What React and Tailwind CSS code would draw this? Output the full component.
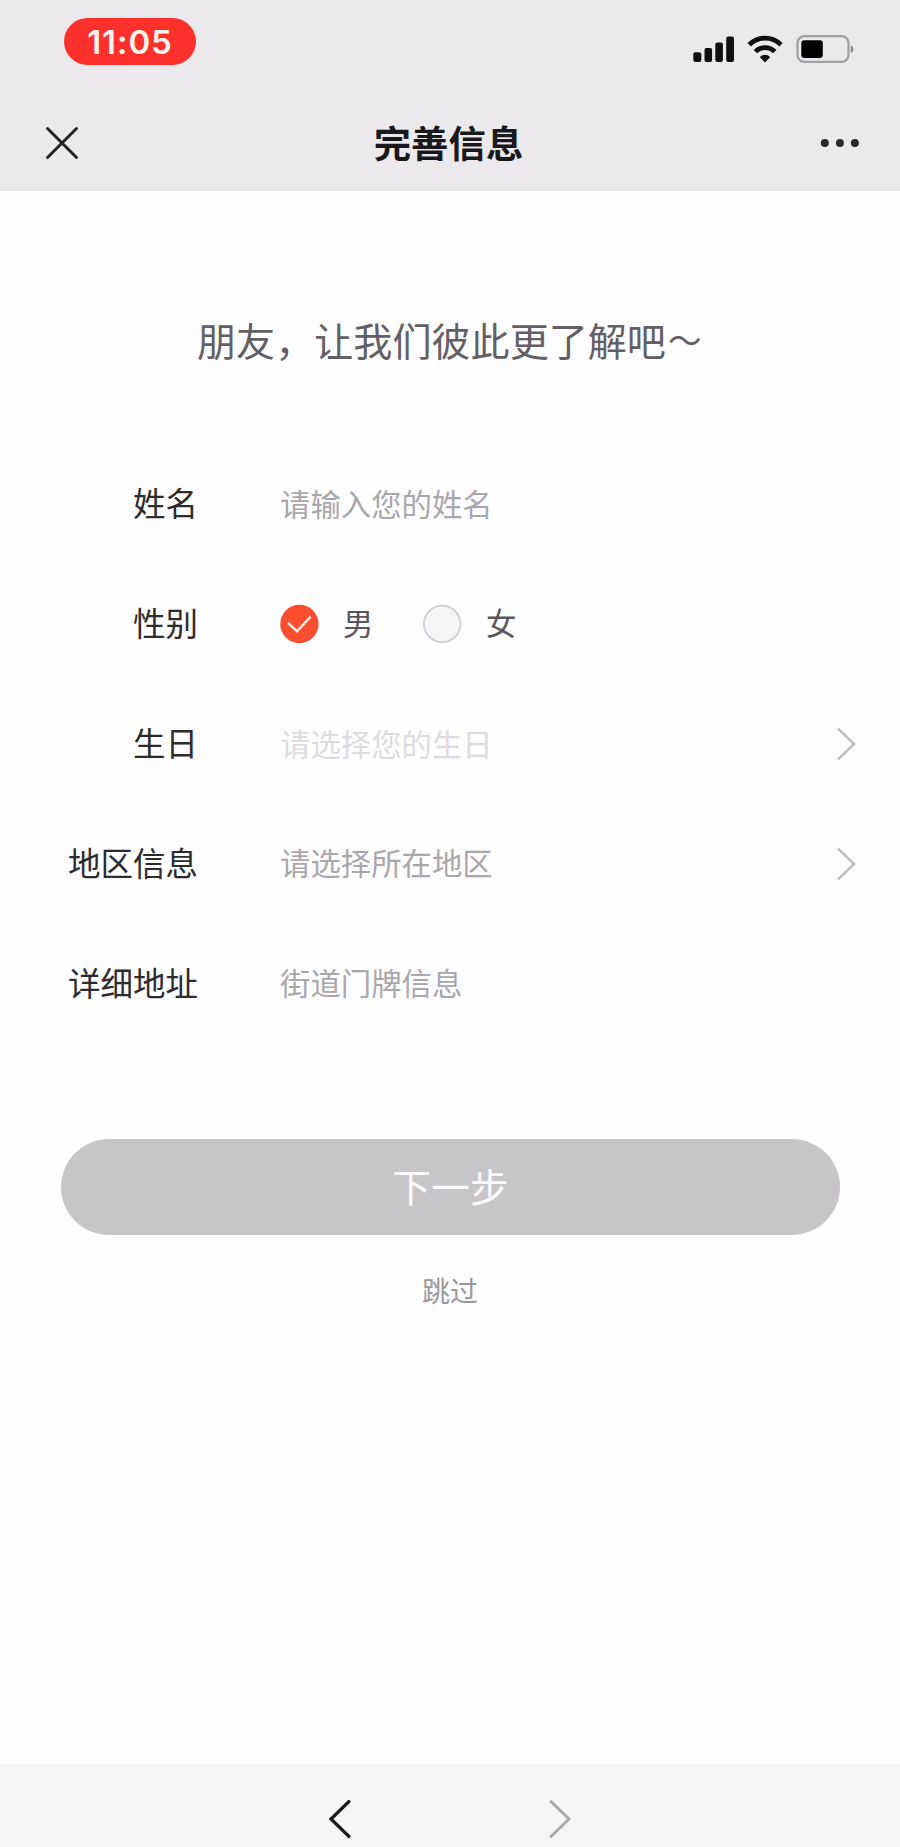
import { useState } from "react";

const fields = [
  { key: "name", label: "姓名", type: "input", placeholder: "请输入您的姓名" },
  { key: "gender", label: "性别", type: "radio", options: ["男", "女"] },
  { key: "birthday", label: "生日", type: "picker", placeholder: "请选择您的生日", faded: true },
  { key: "region", label: "地区信息", type: "picker", placeholder: "请选择所在地区" },
  { key: "address", label: "详细地址", type: "input", placeholder: "街道门牌信息" },
];

function StatusBar() {
  return (
    <div className="flex h-[84px] items-start justify-between pl-16 pr-[45px]">
      <div className="mt-[18px] flex h-[47px] w-[132px] items-center justify-center rounded-full bg-[#fd312c] pt-px font-['Inter'] text-[33px] leading-none font-semibold tracking-[0.9px] text-[#fff3ee]">
        11:05
      </div>
      <svg className="mt-[34px] h-[30px] w-[163px]" viewBox="0 0 163 30">
        <g fill="#101012">
          <rect x="1.3" y="18.2" width="8" height="9.8" rx="2" />
          <rect x="12.5" y="14" width="7.6" height="14" rx="2" />
          <rect x="23.3" y="8.4" width="7.6" height="19.6" rx="2" />
          <rect x="34.2" y="2.4" width="7.8" height="25.6" rx="2" />
          <path d="M68.6 23.2a6.2 6.2 0 0 1 8.8 0L73 27.6Z" stroke="#101012" strokeWidth="1.2" strokeLinejoin="round" />
        </g>
        <g fill="none" stroke="#101012" strokeWidth="4.8">
          <path d="M57.2 10.8a22.4 22.4 0 0 1 31.8 0" />
          <path d="M63.4 17.6a13.6 13.6 0 0 1 19.4 0" />
        </g>
        <rect x="105.5" y="2.1" width="51" height="25.8" rx="7" fill="none" stroke="#a09fa2" strokeWidth="2.2" />
        <rect x="109.3" y="6.3" width="21.5" height="17.6" rx="3" fill="#030303" />
        <path d="M158.8 11.5c3.6 1 3.6 6.6 0 7.6Z" fill="#8d8c8f" />
      </svg>
    </div>
  );
}

function NavBar() {
  return (
    <div className="flex h-[106px] items-center justify-between pl-[45px] pr-10">
      <svg className="mt-[11px] h-[34px] w-[34px]" viewBox="0 0 34 34" fill="none" stroke="#232225" strokeWidth="3" strokeLinecap="round">
        <path d="M2.5 2.5 31.5 31.5M31.5 2.5 2.5 31.5" />
      </svg>
      <h1 className="mt-[11px] mr-[2px] text-[37.4px] leading-none font-bold text-[#19181b]">完善信息</h1>
      <svg className="mt-[12px] h-[10px] w-[40px]" viewBox="0 0 40 10" fill="#29282b">
        <circle cx="4.8" cy="5" r="4" />
        <circle cx="19.9" cy="5" r="4" />
        <circle cx="34.9" cy="5" r="4" />
      </svg>
    </div>
  );
}

function Radio({ checked }) {
  return (
    <svg className="h-10 w-10" viewBox="0 0 40 40" fill="none">
      {checked ? (
        <>
          <circle cx="19.4" cy="20" r="19.2" fill="#fb4d30" />
          <path d="m8 18.8 9 8.4 13.6-14.6" stroke="#ffe9dc" strokeWidth="2.4" />
        </>
      ) : (
        <circle cx="19.2" cy="20" r="18.3" fill="#f5f4f7" stroke="#cfcdd1" strokeWidth="1.8" />
      )}
    </svg>
  );
}

function FieldRow({ field, gender, setGender }) {
  return (
    <div className="flex h-[119.9px] items-center">
      <div className="w-[198px] pb-[3px] text-right text-[32.5px] leading-none text-[#2c2b2e]">{field.label}</div>
      <div className="ml-[82px] flex flex-1 items-center text-[30.4px] leading-none">
        {field.type === "radio" ? (
          field.options.map((option) => (
            <button key={option} className="flex w-[143px] items-center" onClick={() => setGender(option)}>
              <Radio checked={gender === option} />
              <span className="ml-[23px] pb-[3px] text-[#58565a]">{option}</span>
            </button>
          ))
        ) : (
          <span className={field.faded ? "pb-0.5 text-[#dedbe0]" : "pb-0.5 text-[#aaa7ac]"}>{field.placeholder}</span>
        )}
      </div>
      {field.type === "picker" ? (
        <svg className="mt-px mr-11 h-[34px] w-5" viewBox="0 0 20 34" fill="none" stroke="#b9b8ba" strokeWidth="2.4">
          <path d="m2 1.5 16 15.5L2 32.5" />
        </svg>
      ) : null}
    </div>
  );
}

export default function App() {
  const [gender, setGender] = useState("男");

  return (
    <div className="flex h-[1847px] w-[900px] flex-col overflow-hidden bg-[#fefefe] font-['Noto_Sans_CJK_SC',sans-serif]">
      <header className="h-[191px] shrink-0 bg-[#ebe9ec]">
        <StatusBar />
        <NavBar />
      </header>

      <main className="flex-1">
        <p className="mt-[129px] ml-[197px] flex h-[39px] items-center text-[39.1px] leading-none whitespace-nowrap text-[#626064]">
          朋友，让我们彼此更了解吧<span className="ml-[2px] pb-[2px] text-[33.5px]">～</span>
        </p>
        <div className="mt-[85px]">
          {fields.map((field) => (
            <FieldRow key={field.key} field={field} gender={gender} setGender={setGender} />
          ))}
        </div>
        <button className="mt-[96px] ml-[61px] flex h-[96px] w-[779px] items-center justify-center rounded-full bg-[#c7c5c8] pb-1 text-[39px] leading-none text-[#fbfafc]">
          下一步
        </button>
        <button className="mx-auto mt-[41px] block text-[28px] leading-none text-[#9a979c]">跳过</button>
      </main>

      <footer className="flex h-[83px] shrink-0 justify-center gap-[196px] border-t-2 border-[#f4f2f5] bg-[#f7f5f8] pt-[33px]">
        <svg className="h-10 w-6" viewBox="0 0 24 40" fill="none" stroke="#1b1a1d" strokeWidth="3.2" strokeLinecap="round">
          <path d="M21 2.5 3 20l18 17.5" />
        </svg>
        <svg className="h-10 w-6" viewBox="0 0 24 40" fill="none" stroke="#aaa9ac" strokeWidth="3" strokeLinecap="round">
          <path d="m3 2.5 18 17.5L3 37.5" />
        </svg>
      </footer>
    </div>
  );
}
